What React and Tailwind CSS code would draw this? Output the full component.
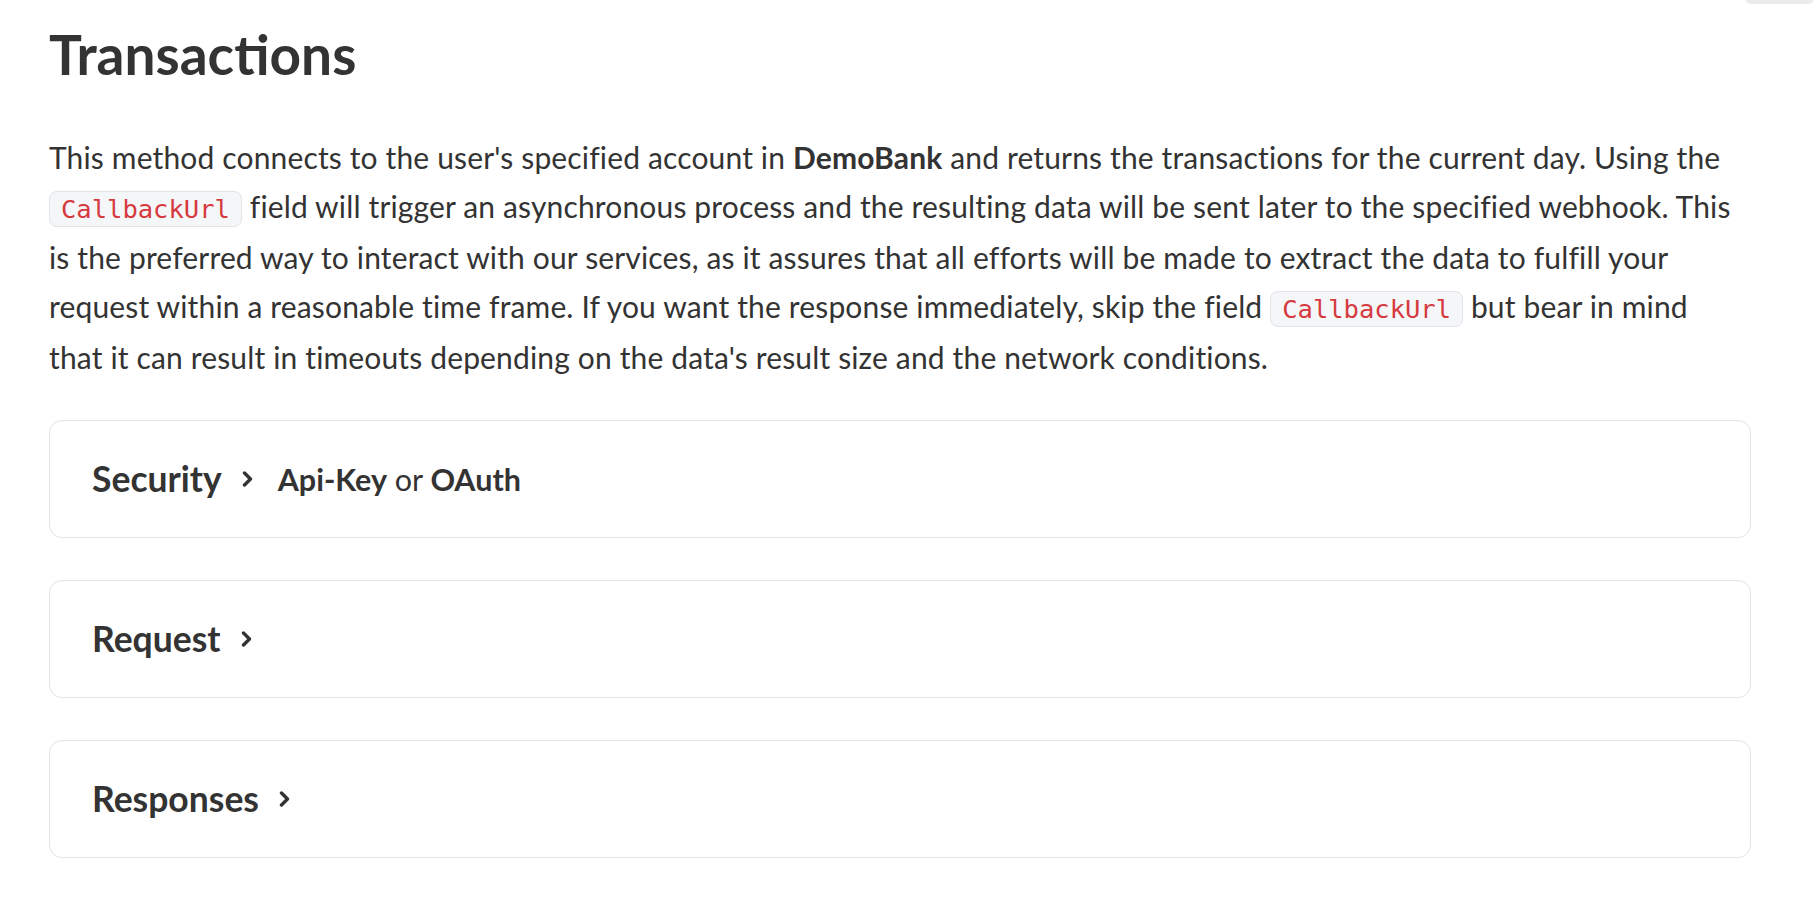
function Code({ children }) {
  return (
    <code className="rounded-[8px] border border-[#e2e4e8] bg-[#f5f6f8] px-[11px] py-[2px] font-['DejaVu_Sans_Mono',monospace] text-[25.5px] tracking-normal text-[#d63a3f]">
      {children}
    </code>
  );
}

function Chevron() {
  return (
    <svg width="11" height="16" viewBox="0 0 11 16" fill="none" className="shrink-0">
      <polyline points="2.5,2 8.5,8 2.5,14" stroke="#333333" strokeWidth="3.4" strokeLinecap="round" strokeLinejoin="round" />
    </svg>
  );
}

function Section({ title, children }) {
  return (
    <div className="flex h-[118px] items-center gap-[20px] rounded-[13px] border-[1.5px] border-[#e2e3e5] bg-white px-[42px]">
      <span className="text-[35.5px] font-bold leading-[40px]">{title}</span>
      <Chevron />
      {children && <span className="ml-[5px] text-[30.5px] leading-[40px]">{children}</span>}
    </div>
  );
}

export default function App() {
  return (
    <div className="relative min-h-screen bg-white font-['Lato','Noto_Sans',sans-serif] text-[#333333]">
      <div className="absolute -top-[20px] right-0 h-[24px] w-[69px] rounded-md bg-[#ebebeb]" />

      <div className="pl-[49px] pr-[63px] pt-[21px]">
        <h1 className="text-[55px] font-bold leading-[66px]">Transactions</h1>

        <p className="-mr-[40px] mt-[46px] text-[30px] leading-[48.5px] tracking-[0.15px]">
          This method connects to the user's specified account in <strong className="font-bold">DemoBank</strong> and
          returns the transactions for the current day. Using the
          <br />
          <Code>CallbackUrl</Code> field will trigger an asynchronous process and the resulting data will be sent later
          to the specified webhook. This
          <br />
          is the preferred way to interact with our services, as it assures that all efforts will be made to extract
          the data to fulfill your
          <br />
          request within a reasonable time frame. If you want the response immediately, skip the field{" "}
          <Code>CallbackUrl</Code> but bear in mind
          <br />
          that it can result in timeouts depending on the data's result size and the network conditions.
        </p>

        <div className="mt-[38px] flex flex-col gap-[42px]">
          <Section title="Security">
            <b className="font-bold">Api-Key</b> or <b className="font-bold">OAuth</b>
          </Section>
          <Section title="Request" />
          <Section title="Responses" />
        </div>
      </div>
    </div>
  );
}
